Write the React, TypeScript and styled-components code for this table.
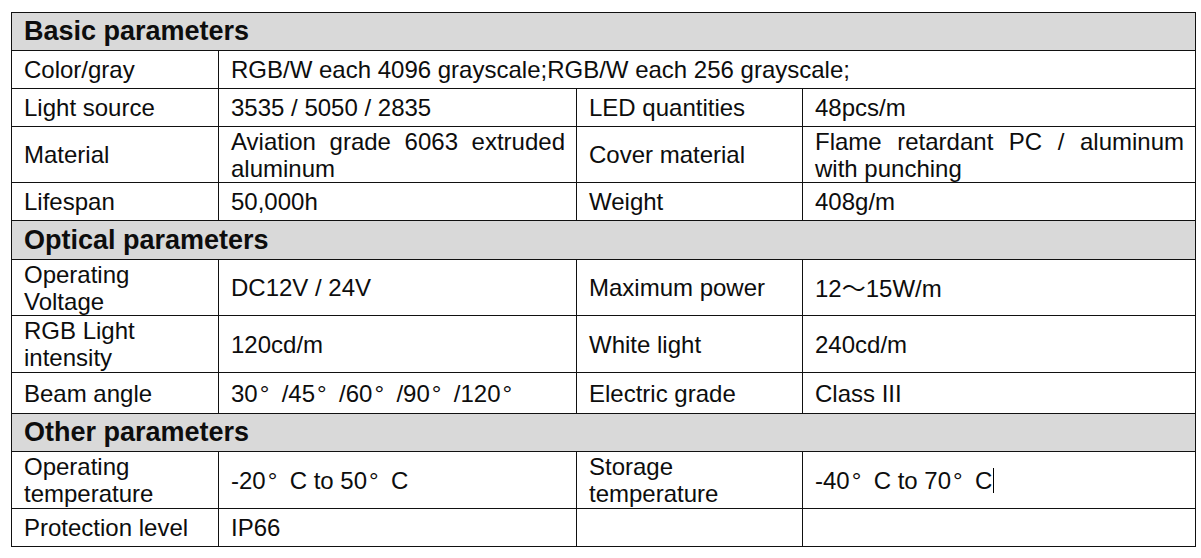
import React from "react";
import styled, { createGlobalStyle } from "styled-components";

const GlobalStyle = createGlobalStyle`
  html, body {
    margin: 0;
    padding: 0;
    background: #ffffff;
  }
  body {
    font-family: "Liberation Sans", Arial, "Noto Sans CJK SC", sans-serif;
    color: #0d0d0d;
  }
`;

const Page = styled.div`
  padding: 12px 0 0 11px;
`;

const Sheet = styled.table`
  width: 1184px;
  table-layout: fixed;
  border-collapse: collapse;
  font-size: 24px;
  line-height: 27px;
`;

const Row = styled.tr<{ $h: number }>`
  height: ${(p) => p.$h}px;
`;

const SectionCell = styled.td`
  background: #d9d9d9;
  border: 1px solid #111;
  padding: 0 12px;
  font-size: 27px;
  font-weight: 700;
  vertical-align: middle;
`;

const Cell = styled.td<{ $justify?: boolean }>`
  border: 1px solid #111;
  padding: 0 11px 0 12px;
  vertical-align: middle;
  text-align: ${(p) => (p.$justify ? "justify" : "left")};
  overflow: hidden;
`;

const Deg = styled.span`
  display: inline-block;
  width: 24px;
  text-align: left;
  padding-left: 2px;
  box-sizing: border-box;
`;

const Wide = styled.span`
  font-family: "Noto Sans CJK SC", sans-serif;
`;

const Caret = styled.span`
  display: inline-block;
  width: 1px;
  height: 25px;
  margin-left: 1px;
  background: #000;
  vertical-align: -4px;
`;

type Pair = { label: React.ReactNode; value: React.ReactNode; justify?: boolean };
type Line = { h: number; cells: Pair[] };
type Section = { title: string; h: number; rows: Line[] };

const d = <Deg>°</Deg>;

const sections: Section[] = [
  {
    title: "Basic parameters",
    h: 38,
    rows: [
      { h: 38, cells: [{ label: "Color/gray", value: "RGB/W each 4096 grayscale;RGB/W each 256 grayscale;" }] },
      {
        h: 38,
        cells: [
          { label: "Light source", value: "3535 / 5050 / 2835" },
          { label: "LED quantities", value: "48pcs/m" },
        ],
      },
      {
        h: 56,
        cells: [
          { label: "Material", value: "Aviation grade 6063 extruded aluminum", justify: true },
          { label: "Cover material", value: "Flame retardant PC / aluminum with punching", justify: true },
        ],
      },
      {
        h: 38,
        cells: [
          { label: "Lifespan", value: "50,000h" },
          { label: "Weight", value: "408g/m" },
        ],
      },
    ],
  },
  {
    title: "Optical parameters",
    h: 39,
    rows: [
      {
        h: 56,
        cells: [
          { label: <>Operating<br />Voltage</>, value: "DC12V / 24V" },
          { label: "Maximum power", value: <>12<Wide>～</Wide>15W/m</> },
        ],
      },
      {
        h: 57,
        cells: [
          { label: <>RGB Light<br />intensity</>, value: "120cd/m" },
          { label: "White light", value: "240cd/m" },
        ],
      },
      {
        h: 41,
        cells: [
          { label: "Beam angle", value: <>30{d}/45{d}/60{d}/90{d}/120{d}</> },
          { label: "Electric grade", value: "Class III" },
        ],
      },
    ],
  },
  {
    title: "Other parameters",
    h: 38,
    rows: [
      {
        h: 57,
        cells: [
          { label: <>Operating<br />temperature</>, value: <>-20{d}C to 50{d}C</> },
          { label: <>Storage<br />temperature</>, value: <>-40{d}C to 70{d}C<Caret /></> },
        ],
      },
      {
        h: 38,
        cells: [
          { label: "Protection level", value: "IP66" },
          { label: "", value: "" },
        ],
      },
    ],
  },
];

export default function App() {
  return (
    <Page>
      <GlobalStyle />
      <Sheet>
        <colgroup>
          <col style={{ width: 207 }} />
          <col style={{ width: 358 }} />
          <col style={{ width: 226 }} />
          <col style={{ width: 393 }} />
        </colgroup>
        <tbody>
          {sections.map((s) => (
            <React.Fragment key={s.title}>
              <Row $h={s.h}>
                <SectionCell colSpan={4}>{s.title}</SectionCell>
              </Row>
              {s.rows.map((r, i) => (
                <Row key={i} $h={r.h}>
                  {r.cells.map((c, j) => (
                    <React.Fragment key={j}>
                      <Cell>{c.label}</Cell>
                      <Cell $justify={c.justify} colSpan={r.cells.length === 1 ? 3 : 1}>
                        {c.value}
                      </Cell>
                    </React.Fragment>
                  ))}
                </Row>
              ))}
            </React.Fragment>
          ))}
        </tbody>
      </Sheet>
    </Page>
  );
}
